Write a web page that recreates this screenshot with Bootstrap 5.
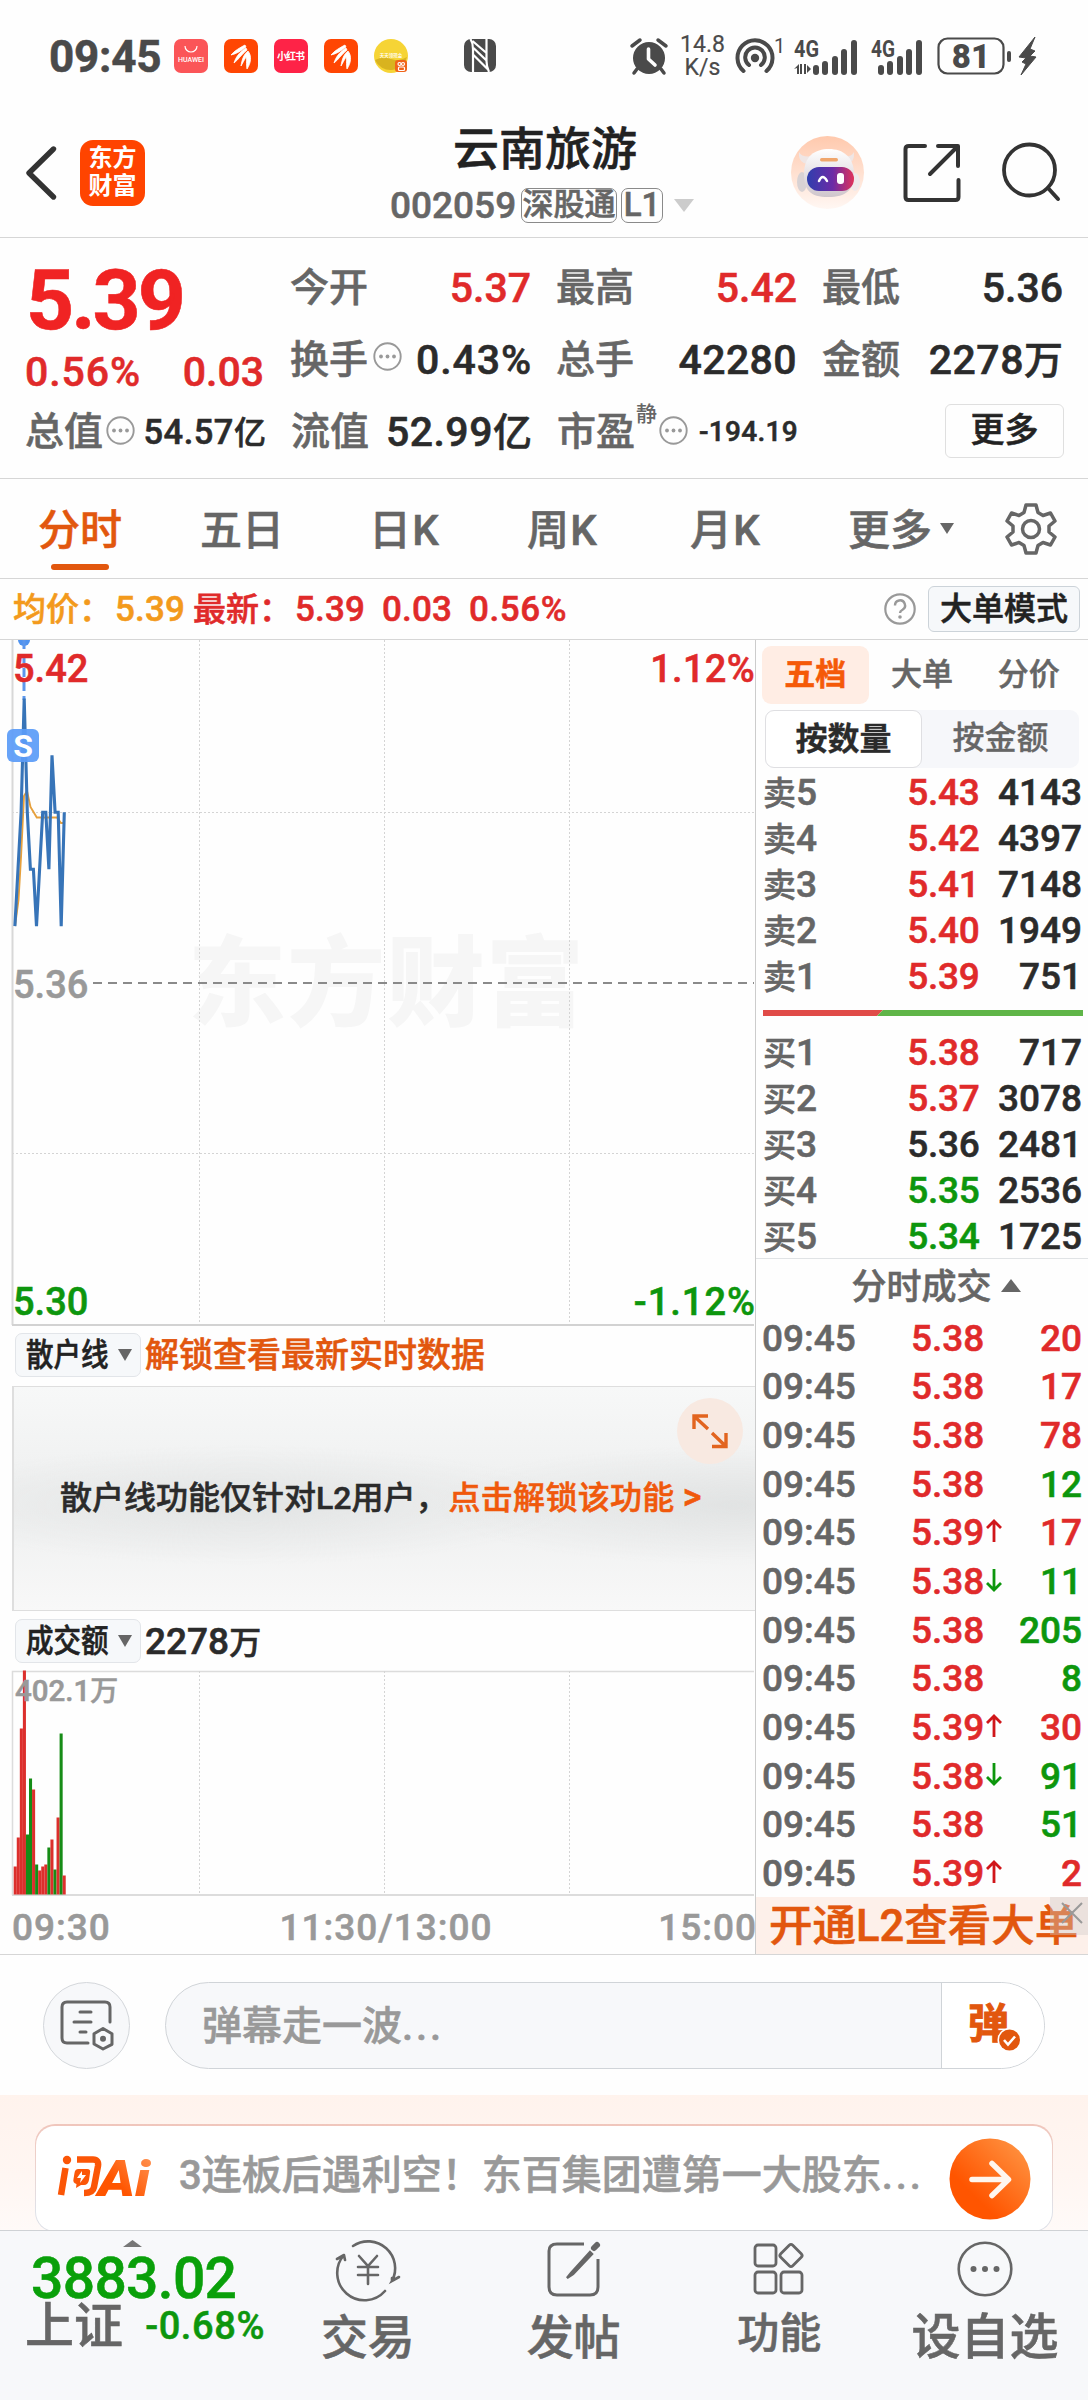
<!DOCTYPE html>
<html lang="zh-CN">
<head>
<meta charset="utf-8">
<meta name="viewport" content="width=device-width, initial-scale=1">
<title>云南旅游 002059</title>
<link href="https://cdn.jsdelivr.net/npm/bootstrap@5.3.0/dist/css/bootstrap.min.css" rel="stylesheet">
<style>
  :root { --up:#e02a2a; --down:#0d960d; --ink:#2b2b2b; --grey:#666; --soft:#999; --accent:#e2570e; --rule:#d6d6d6; }
  body { width:1088px; height:2400px; overflow:hidden; background:#fefefe; color:var(--ink);
         font-family:Roboto,"Noto Sans CJK SC",sans-serif; font-weight:500; font-size:37px; line-height:1; -webkit-text-stroke:.55px; }
  svg { display:block; flex:none; overflow:visible; }
  svg text { -webkit-text-stroke:0; }
  .up { color:var(--up); } .down { color:var(--down); } .ink { color:var(--ink); } .grey { color:var(--grey); } .soft { color:var(--soft); } .accent { color:var(--accent); }
  .rel { position:relative; }
  .status { height:112px; padding-left:49px; color:#4a4a4a; }
  .status .clock { font-size:44px; font-weight:700; width:125px; letter-spacing:-.2px; padding-top:2px; }
  .appdot { width:34px; height:34px; border-radius:7px; margin-right:16px; overflow:hidden; }
  .head { height:126px; border-bottom:1px solid var(--rule); }
  .brand { width:65px; height:66px; border-radius:13px; background:#ff4400; color:#fff; font-size:24px; line-height:28px; font-weight:700; padding-top:4px; -webkit-text-stroke:0; }
  .title { font-size:46px; line-height:56px; color:#222; }
  .tagbox { border:1px solid #8a8a8a; border-radius:7px; height:35px; line-height:32px; font-size:31px; text-align:center; }
  .stats { height:241px; border-bottom:1px solid var(--rule); padding:14px 24px 0 25px; }
  .srow { height:72px; }
  .srow > div { width:241px; margin-right:25px; height:72px; }
  .srow > div:last-child { margin-right:0; }
  .lab { font-size:39px; color:var(--grey); }
  .num { font-size:41px; }
  .pct { letter-spacing:.9px; margin-right:-1px; }
  .morebtn { width:119px; height:54px; border:1px solid #dfdfdf; border-radius:6px; font-size:34px; line-height:51px; text-align:center; color:#222; margin-top:-3px; }
  .tabs { height:100px; border-bottom:1px solid var(--rule); font-size:42px; color:var(--grey); padding-top:5px; }
  .tabs .on { color:var(--accent); }
  .tabs .on::after { content:""; position:absolute; left:13px; bottom:-18px; width:58px; height:6px; border-radius:3px; background:var(--accent); }
  .tabs .kk { letter-spacing:1.2px; }
  .info { height:61px; border-bottom:1px solid var(--rule); padding:0 8px 0 13px; font-size:35px; }
  .info > span { padding-top:1px; letter-spacing:.2px; }
  .info .cj { font-size:33px; letter-spacing:0; }
  .modebtn { width:152px; height:46px; border:1px solid #ccd3d9; border-radius:6px; background:#f6f8fa; font-size:32px; line-height:44px; text-align:center; color:#222; }
  .main { height:1315px; border-bottom:1px solid var(--rule); }
  .lcol { width:756px; padding-left:12px; border-right:1px solid #ccc; }
  .rcol { width:332px; }
  .pricebox { height:686px; }
  .axis { position:absolute; font-size:38px; line-height:40px; }
  .selrow { height:60px; padding-left:3px; }
  .sel { width:126px; height:44px; border:1px solid #e2e5e9; border-radius:7px; background:#f6f8fa; padding-left:10px; margin-right:4px; color:#222; }
  .sel span { font-size:32px; width:82px; white-space:nowrap; }
  .sel b { display:inline-block; font-weight:500; transform:scaleX(.86); transform-origin:0 50%; }
  .lockbox { height:226px; border:1px solid #dedede; border-left-width:2px; border-right:0; font-size:32px; 
    background:radial-gradient(ellipse 330px 60px at 230px 118px,rgba(222,224,224,.75),transparent),radial-gradient(ellipse 300px 60px at 720px 118px,rgba(222,224,224,.8),transparent),linear-gradient(#f7f8f8,#eff0f0 45%,#eff0f0 55%,#f8f8f8); }
  .expand { position:absolute; right:12px; top:11px; width:66px; height:66px; border-radius:50%; background:#f8e9e1; }
  .times { height:58px; padding:4px 0 0 0; color:var(--soft); letter-spacing:1px; }
  .rtabs { height:70px; padding:6px 6px 6px 6px; font-size:31px; }
  .rtabs div { width:107px; height:58px; border-radius:9px; line-height:58px; text-align:center; color:var(--grey); }
  .rtabs .on { background:#ffede4; color:#f55a08; font-weight:700; }
  .seg { height:58px; margin:0 9px; border-radius:9px; background:#f6f7fa; font-size:32px; line-height:57px; text-align:center; color:var(--grey); -webkit-text-stroke:.3px; }
  .seg div { width:50%; }
  .seg .on { background:#fff; border:1px solid #dfdfe2; border-radius:9px; color:#2b2b2b; font-weight:700; }
  .lv { height:46px; padding:2px 6px 0 7px; }
  .lv .cj { font-size:33px; }
  .lv .nm { width:102px; } .lv .pr { width:114.500px; text-align:right; letter-spacing:-.3px; } .lv .qt { flex:1; text-align:right; }
  .tk { height:48.67px; padding:2px 6px 0 6px; }
  .tk .tm { width:149px; } .tk .pr { width:75px; } .tk .ar { width:18px; } .tk .qt { flex:1; text-align:right; }
  .l2bar { height:57px; background:#fdf0ea; color:var(--accent); font-size:43.500px; line-height:59px; padding-left:13px; white-space:nowrap; overflow:hidden; }
  .l2bar i { position:absolute; right:0; top:0; width:38px; height:38px; background:rgba(205,200,200,.38); }
  .danmu { height:140px; padding-left:43px; }
  .rnd { width:87px; height:87px; border:1px solid #d4d7db; border-radius:50%; background:#f7f8fa; margin-right:35px; }
  .bar { width:880px; height:87px; border:1px solid #d0d4d8; border-radius:44px; background:#f7f8fa; overflow:hidden; font-size:40px; color:var(--soft); }
  .bar .send { width:103px; border-left:1px solid #d0d4d8; background:#fff; }
  .ell { letter-spacing:2.900px; }
  .ai { height:135px; background:linear-gradient(#fff3ed,#fff6f2 60%,#fffaf8); padding:29px 35px 0 35px; overflow:hidden; }
  .aicard { height:108px; border-radius:20px; padding:2px 1px 1px; background:linear-gradient(#f0c6bc,#ecd3ce 40%,#dfe1e8 80%); }
  .aiin { height:100%; border-radius:19px; background:#fff; font-size:40px; color:var(--soft); white-space:nowrap; padding-left:21px; }
  .foot { height:171px; background:#f7f8fa; border-top:1px solid #cfd2d5; color:var(--grey); }
  .foot .it { width:205.75px; padding-top:9px; font-size:47px; }
  .foot .it span { line-height:56px; margin-top:12px; white-space:nowrap; }
  .idx { width:265px; padding-left:25px; }
</style>
<script src="https://cdn.jsdelivr.net/npm/bootstrap@5.3.0/dist/js/bootstrap.bundle.min.js"></script>
</head>
<body>

<svg width="0" height="0" class="position-absolute">
  <defs>
    <symbol id="dots" viewBox="0 0 29 29"><circle cx="14.5" cy="14.5" r="13.2" fill="none" stroke="#999" stroke-width="1.9"/><g fill="#999"><circle cx="8" cy="14.5" r="1.9"/><circle cx="14.5" cy="14.5" r="1.9"/><circle cx="21" cy="14.5" r="1.9"/></g></symbol>
    <symbol id="east" viewBox="0 0 34 34"><rect width="34" height="34" fill="#ff4603"/><path d="M7 16C10 12 17 8 21 6l1 2C17 12 12 15 7 16zM10 24c2-7 7-12 12-15l1 2C17 16 14 21 10 24zM17 27c1-7 3-12 7-15 4 5 3 12-1 18-1-6 0-9-1-12-2 3-3 6-5 9z" fill="#fff" stroke="#fff" stroke-width=".8"/></symbol>
  </defs>
</svg>

<!-- system status bar -->
<div class="status d-flex align-items-center">
  <div class="clock">09:45</div>
  <div class="appdot"><svg width="34" height="34"><rect width="34" height="34" fill="#fb5558"/><path d="M11 7a6 6 0 0 0 12 0" fill="none" stroke="#fff" stroke-width="1.2"/><text x="17" y="22.500" text-anchor="middle" font-size="7" textLength="26" fill="#fff">HUAWEI</text></svg></div>
  <div class="appdot"><svg width="34" height="34"><use href="#east"/></svg></div>
  <div class="appdot"><svg width="34" height="34"><rect width="34" height="34" fill="#fe2347"/><text x="17" y="21" text-anchor="middle" font-size="10" font-weight="700" textLength="28" fill="#fff">小红书</text></svg></div>
  <div class="appdot"><svg width="34" height="34"><use href="#east"/></svg></div>
  <div class="appdot rounded-circle me-0" style="overflow:visible"><svg width="34" height="34"><circle cx="17" cy="17" r="17" fill="#f6d435"/><path d="M1 21q8-4 16-1t16-2A17 17 0 0 1 1 21z" fill="#d9b31f"/><text x="17" y="18" text-anchor="middle" font-size="4.500" fill="#fff">天天领现金</text><rect x="21" y="21" width="12" height="12" rx="3" fill="#f0641a"/><g fill="none" stroke="#fff" stroke-width="1.200"><circle cx="25.500" cy="25" r="1.500"/><circle cx="29" cy="25" r="1.500"/><rect x="24.500" y="28" width="6" height="3.500" rx="1"/></g></svg></div>
  <svg width="32" height="34" viewBox="0 0 32 34" style="margin-left:56px"><rect width="32" height="33" rx="7" fill="#4a4a4a"/><g stroke="#fff" stroke-width="2.200" fill="none"><path d="M6.500 0C9 4 9 6 9 10v23M22.500 0v22c0 5 1 8 2.500 11M8.500 2l14 12M9.500 9l13.500 13M9.500 16l14 14"/></g></svg>
  <svg width="38" height="36" viewBox="0 0 38 36" style="margin-left:134px"><circle cx="19" cy="20" r="16" fill="#4a4a4a"/><path d="M2 8l8-6M36 8l-8-6M7 31l-3 4M31 31l3 4" stroke="#4a4a4a" stroke-width="3.500" stroke-linecap="round"/><path d="M18.500 11v10l6.500 6" stroke="#fefefe" stroke-width="3.600" fill="none" stroke-linecap="round" stroke-linejoin="round"/></svg>
  <div class="text-center fw-normal" style="width:64px;font-size:23px;line-height:23px;padding-left:5px;-webkit-text-stroke:.2px">14.8<br>K/s</div>
  <svg width="50" height="36" viewBox="0 0 50 36" style="margin-left:3px"><g fill="none" stroke="#4a4a4a" stroke-width="4" stroke-linecap="round"><path d="M8.500 33A17.500 17.500 0 1 1 31.500 33"/><path d="M14 27A9.800 9.800 0 1 1 26 27"/></g><circle cx="20" cy="20" r="4.200" fill="#4a4a4a"/><text x="39" y="15" font-size="20" font-weight="400" fill="#4a4a4a">1</text></svg>
  <svg width="68" height="40" viewBox="0 -2 68 40" style="margin-left:9px"><g fill="#4a4a4a"><text x="0" y="19" font-size="23" font-weight="700" textLength="25" lengthAdjust="spacingAndGlyphs">4G</text><path d="M5 26v10H3V30L0 31zM6 26l0 10h2V26zM10 26v10h2V26zM13 36V27l4 4-4 4z"/><rect x="19" y="27" width="6" height="10" rx="3"/><rect x="28" y="23" width="6" height="14" rx="3"/><rect x="38" y="18" width="6" height="19" rx="3"/><rect x="47" y="11" width="6" height="26" rx="3"/><rect x="57" y="2" width="6" height="35" rx="3"/></g></svg>
  <svg width="58" height="40" viewBox="0 -2 58 40" style="margin-left:9px"><g fill="#4a4a4a"><text x="0" y="19" font-size="23" font-weight="700" textLength="24" lengthAdjust="spacingAndGlyphs">4G</text><rect x="7" y="27" width="6" height="10" rx="3"/><rect x="16" y="23" width="6" height="14" rx="3"/><rect x="26" y="18" width="6" height="19" rx="3"/><rect x="35" y="11" width="6" height="26" rx="3"/><rect x="45" y="2" width="6" height="35" rx="3"/></g></svg>
  <svg width="104" height="40" viewBox="0 0 104 40" style="margin-left:8px"><rect x="1.500" y="2.500" width="65" height="35" rx="9" fill="none" stroke="#4a4a4a" stroke-width="2.200"/><text x="34" y="31.500" font-size="33" font-weight="900" text-anchor="middle" fill="#4a4a4a">81</text><rect x="70" y="15" width="4" height="11" rx="2" fill="#4a4a4a"/><path d="M98 1L82 21l7 1-4 4 4 2-5 11 15-18-6-1 5-5-5-2z" fill="#4a4a4a" stroke="#4a4a4a"/></svg>
</div>

<!-- title bar -->
<div class="head d-flex rel">
  <svg width="34" height="56" viewBox="0 0 34 56" style="margin:33px 21px 0 25px"><path d="M28.500 4L4 28l24.500 24" fill="none" stroke="#333" stroke-width="5.400" stroke-linecap="round" stroke-linejoin="round"/></svg>
  <div class="brand text-center" style="margin-top:28px">东方<br>财富</div>
  <div class="flex-grow-1"></div>
  <div style="width:310px" class="d-flex flex-column align-items-start">
    <div class="title" style="margin:9px 0 0 63px">云南旅游</div>
    <div class="d-flex align-items-center grey" style="margin-top:10px">
      <span style="width:131px">002059</span>
      <div class="tagbox" style="width:96px">深股通</div>
      <div class="tagbox" style="width:42px;margin:0 11px 0 4px;font-size:33px">L1</div>
      <svg width="20" height="13"><path d="M0 0h20L10 13z" fill="#ccc"/></svg>
    </div>
  </div>
  <svg width="73" height="73" viewBox="0 0 73 73" style="margin:24px 0 0 91px">
    <defs><linearGradient id="rb" x2="0" y2="1"><stop offset="0" stop-color="#ffc9ad"/><stop offset="1" stop-color="#fff7f3"/></linearGradient><linearGradient id="vs"><stop offset="0" stop-color="#2f3fae"/><stop offset=".55" stop-color="#6c2ba6"/><stop offset="1" stop-color="#e0335a"/></linearGradient><linearGradient id="hd" x2="0" y2="1"><stop offset="0" stop-color="#fff"/><stop offset="1" stop-color="#cfc6cc"/></linearGradient></defs>
    <circle cx="36.500" cy="36.500" r="36.500" fill="url(#rb)"/>
    <path d="M8 16q-1 11 9 12l5-8q-11 2-14-4zM63 16q1 11-8 12l-5-8q10 2 13-4z" fill="#efe6e5"/>
    <ellipse cx="11" cy="46" rx="5" ry="10" fill="#d8d2d4"/><ellipse cx="64" cy="46" rx="5" ry="9" fill="#efe9ea"/>
    <path d="M13 38C13 20 24 13 38 13s25 8 25 25c0 16-8 23-26 23S13 54 13 38z" fill="url(#hd)"/>
    <rect x="16" y="31" width="47" height="24" rx="12" fill="url(#vs)"/><rect x="29" y="22" width="18" height="3.500" rx="1.700" fill="#f0a66c"/>
    <path d="M28 45q3.500-8 8 0" stroke="#fff" stroke-width="2.500" fill="none" stroke-linecap="round"/><rect x="46" y="37" width="7" height="11" rx="3" fill="#fff"/>
  </svg>
  <svg width="57" height="59" viewBox="0 0 57 59" style="margin:31px 0 0 39px"><path d="M22 3H6Q2.500 3 2.500 6v48q0 3 3 3h47q3 0 3-3V37M35 3h20v20M54 4L27 31" fill="none" stroke="#333" stroke-width="4" stroke-linecap="round" stroke-linejoin="round"/></svg>
  <svg width="60" height="62" viewBox="0 0 60 62" style="margin:29px 27px 0 41px"><circle cx="28.500" cy="29" r="25.500" fill="none" stroke="#333" stroke-width="3.800"/><path d="M47 47l10 11" stroke="#333" stroke-width="4" stroke-linecap="round"/></svg>
</div>

<!-- quote figures -->
<div class="stats">
  <div class="d-flex">
    <div style="width:265px;height:144px">
      <div class="fw-bold" style="font-size:84px;line-height:84px;color:#f02323;letter-spacing:-3px;margin:7px 0 0 1px">5.39</div>
      <div class="num up d-flex justify-content-between" style="margin:9px 26px 0 0"><span class="pct">0.56%</span><span>0.03</span></div>
    </div>
    <div class="flex-grow-1">
      <div class="srow d-flex">
        <div class="d-flex align-items-center justify-content-between"><span class="lab">今开</span><span class="num up">5.37</span></div>
        <div class="d-flex align-items-center justify-content-between"><span class="lab">最高</span><span class="num up">5.42</span></div>
        <div class="d-flex align-items-center justify-content-between"><span class="lab">最低</span><span class="num">5.36</span></div>
      </div>
      <div class="srow d-flex">
        <div class="d-flex align-items-center justify-content-between"><span class="lab">换手</span><svg width="29" height="29" style="margin:-8px 10px 0 0"><use href="#dots"/></svg><span class="num pct">0.43%</span></div>
        <div class="d-flex align-items-center justify-content-between"><span class="lab">总手</span><span class="num" style="letter-spacing:.4px">42280</span></div>
        <div class="d-flex align-items-center justify-content-between"><span class="lab">金额</span><span class="num"><span style="letter-spacing:.5px">2278</span><span style="font-size:39px">万</span></span></div>
      </div>
    </div>
  </div>
  <div class="srow d-flex">
    <div class="d-flex align-items-center justify-content-between"><span class="lab">总值</span><svg width="29" height="29" style="margin:-4px 0 0 -2px"><use href="#dots"/></svg><span style="font-size:34.500px;margin-left:4px"><span style="letter-spacing:.5px">54.57</span><span style="font-size:32px">亿</span></span></div>
    <div class="d-flex align-items-center justify-content-between"><span class="lab">流值</span><span class="num"><span style="letter-spacing:.5px">52.99</span><span style="font-size:39px">亿</span></span></div>
    <div class="d-flex align-items-center"><span class="lab">市盈</span><span class="grey" style="font-size:21px;margin:-36px 2px 0 1px;-webkit-text-stroke:0">静</span><svg width="29" height="29" style="margin-top:-4px"><use href="#dots"/></svg><span class="ms-auto" style="font-size:28px;letter-spacing:.3px">-194.19</span></div>
    <div class="d-flex align-items-center justify-content-end"><div class="morebtn">更多</div></div>
  </div>
</div>

<!-- chart period tabs -->
<div class="tabs d-flex align-items-center">
  <div class="on rel" style="margin-left:38px;width:162px">分时</div>
  <div style="width:169px">五日</div>
  <div class="kk" style="width:158px">日K</div>
  <div class="kk" style="width:163px">周K</div>
  <div class="kk" style="width:158px">月K</div>
  <div style="width:92px">更多</div>
  <svg width="14" height="11" style="margin-top:-6px"><path d="M0 0h14L7 11z" fill="#666"/></svg>
  <svg width="50" height="52" viewBox="-25 -26 50 52" style="margin:-5px 0 0 52px"><g fill="none" stroke="#666" stroke-width="3.500" stroke-linejoin="round"><path d="M-5-24H5L7-16.500 12-13.500 19.500-16 24-8 18-3V3L24 8 19.500 16 12 13.500 7 16.500 5 24H-5L-7 16.500-12 13.500-19.500 16-24 8-18 3V-3L-24-8-19.500-16-12-13.500-7-16.500z"/><circle r="8.500"/></g></svg>
</div>

<!-- average / last price line -->
<div class="info d-flex align-items-center">
  <span style="color:#f39a1c;width:102px" class="cj">均价：</span><span style="color:#f39a1c;width:78px">5.39</span>
  <span class="up cj" style="width:102px">最新：</span><span class="up" style="width:87px">5.39</span><span class="up" style="width:87px">0.03</span><span class="up" style="letter-spacing:.6px">0.56%</span>
  <svg width="32" height="32" viewBox="0 0 32 32" class="ms-auto" style="margin-right:12px"><circle cx="16" cy="16" r="14.700" fill="none" stroke="#999" stroke-width="2.200"/><path d="M11 12.500a5 5 0 1 1 7.500 4.200Q16 18 16 20" fill="none" stroke="#999" stroke-width="2.400"/><circle cx="16" cy="24" r="1.800" fill="#999"/></svg>
  <div class="modebtn">大单模式</div>
</div>

<div class="main d-flex">
  <!-- charts -->
  <div class="lcol d-flex flex-column">
    <div class="pricebox rel">
      <svg width="742" height="686" viewBox="12 640 742 686">
        <text x="386" y="1018" text-anchor="middle" font-size="98" font-weight="900" textLength="396" fill="#f6f6f6">东方财富</text>
        <g stroke="#d4d4d4" stroke-width="1" stroke-dasharray="2 2"><path d="M199.500 640V1325M384.500 640V1325M569.500 640V1325M12 812.500H754M12 1153.500H754"/></g>
        <path d="M93 983H754" stroke="#8a8a8a" stroke-width="1.800" stroke-dasharray="9 6"/>
        <path d="M12.500 640V1325" stroke="#d8d8d8" stroke-width="2"/><path d="M12 1325H754" stroke="#d2d2d2" stroke-width="2"/>
        <path d="M18 640a6 6 0 0 0 12 0z" fill="#4f93f0"/><path d="M24 640V700" stroke="#5d97ec" stroke-width="3" stroke-dasharray="9 5"/>
        <path d="M15 926L18.500 900 21 857 24 796 27 791 30.500 807 36.800 817.500H57L61 823 64 823" fill="none" stroke="#e6a03c" stroke-width="1.900"/>
        <path id="priceLine" fill="none" stroke="#3774b8" stroke-width="3.100"/>
      </svg>
      <svg width="33" height="34" viewBox="0 0 33 34" class="position-absolute" style="left:-5px;top:89px"><rect width="32" height="33" rx="6" fill="#5b9cf8" fill-opacity=".93"/><text x="16" y="28" text-anchor="middle" font-size="32" font-weight="700" fill="#fff" style="-webkit-text-stroke:.6px #fff">S</text></svg>
      <span class="axis up" style="left:1px;top:9px">5.42</span><span class="axis up" style="right:0;top:9px;letter-spacing:.3px">1.12%</span>
      <span class="axis soft" style="left:1px;top:325px">5.36</span>
      <span class="axis down" style="left:1px;top:642px">5.30</span><span class="axis down" style="right:-1px;top:642px;letter-spacing:1px">-1.12%</span>
    </div>
    <div class="selrow d-flex align-items-center">
      <div class="sel d-flex align-items-center" style="margin-top:-1px"><span><b>散户线</b></span><svg width="14" height="12" style="margin-left:10px"><path d="M0 0h14L7 12z" fill="#666"/></svg></div>
      <span class="accent" style="font-size:34px;margin-top:-1px">解锁查看最新实时数据</span>
    </div>
    <div class="lockbox rel d-flex align-items-center">
      <div style="padding-left:46px;white-space:nowrap;margin-top:-4px">散户线功能仅针对L2用户，<span style="color:#f0590c;letter-spacing:.3px;margin-left:1px">点击解锁该功能 <span style="font-size:36px">&gt;</span></span></div>
      <div class="expand"><svg width="66" height="66" fill="none" stroke="#e2641f" stroke-width="3.400"><path d="M17 31V18H31M17.500 18.500L31 31M35 35L48.500 48M49 35V48.500H35"/></svg></div>
    </div>
    <div class="selrow d-flex align-items-center">
      <div class="sel d-flex align-items-center" style="margin-top:-1px"><span><b>成交额</b></span><svg width="14" height="12" style="margin-left:10px"><path d="M0 0h14L7 12z" fill="#666"/></svg></div>
      <span>2278<span style="font-size:32px">万</span></span>
    </div>
    <div class="rel" style="height:225px">
      <svg width="742" height="225" viewBox="12 1671 742 225">
        <path d="M12.500 1895V1671.500H754" fill="none" stroke="#dcdcdc" stroke-width="1.500"/><path d="M12 1895H754" stroke="#dcdcdc" stroke-width="2"/>
        <path d="M199.500 1671V1895M384.500 1671V1895M569.500 1671V1895" stroke="#d4d4d4" stroke-dasharray="2 2"/>
        <g id="volBars"></g>
      </svg>
      <span class="axis soft" style="left:3px;top:0;font-size:29.500px">402.1<span style="font-size:28px">万</span></span>
    </div>
    <div class="times d-flex align-items-center justify-content-between"><span>09:30</span><span style="padding-left:3px">11:30/13:00</span><span style="margin-right:-2px">15:00</span></div>
  </div>

  <!-- order book and trades -->
  <div class="rcol">
    <div class="rtabs d-flex"><div class="on">五档</div><div>大单</div><div>分价</div></div>
    <div class="seg d-flex"><div class="on">按数量</div><div>按金额</div></div>
    <div style="height:231px" id="asks"></div>
    <svg width="320" height="6" style="margin:11px 0 12px 7px"><path d="M0 0H120L114 6H0z" fill="#e04b48"/><path d="M120 0H320V6H114z" fill="#5fb548"/></svg>
    <div style="height:230px" id="bids"></div>
    <div class="d-flex align-items-center justify-content-center grey" style="height:55px;border-top:1px solid #e0e3e5;font-size:35px;padding:3px 0 0 47px">分时成交<svg width="20" height="13" style="margin:-5px 19px 0 9px"><path d="M0 13h20L10 0z" fill="#666"/></svg></div>
    <div style="height:584px" id="ticks"></div>
    <div class="l2bar rel">开通L2查看大单<i></i><svg width="24" height="24" class="position-absolute" style="right:4px;top:4px"><path d="M2 2L22 22M22 2L2 22" stroke="#999" stroke-width="2"/></svg></div>
  </div>
</div>

<!-- comment bar -->
<div class="danmu d-flex align-items-center">
  <div class="rnd d-flex align-items-center justify-content-center"><svg width="54" height="52" viewBox="0 0 54 52"><g fill="none" stroke="#666" stroke-width="3" stroke-linecap="round"><path d="M50 23V8q0-5-5-5H7Q2 3 2 8v31q0 5 5 5H28"/><path d="M20 13H31M14 23H31M20 33H26"/><path d="M43 29.500l9 5.200v10.600L43 50l-9-5V34.700z" stroke-linejoin="round"/></g><circle cx="43" cy="39.800" r="3" fill="#666"/></svg></div>
  <div class="bar d-flex">
    <div class="flex-grow-1 d-flex align-items-center" style="padding:3px 0 0 36px">弹幕走一波<span class="ell">...</span></div>
    <div class="send d-flex align-items-center"><svg width="56" height="56" viewBox="0 0 56 56" style="margin-left:27px"><text x="-1" y="41" font-size="41" font-weight="700" fill="#e2570e" stroke="#e2570e" stroke-width="1">弹</text><circle cx="40.500" cy="43" r="12" fill="#fff"/><circle cx="40.500" cy="43" r="10.500" fill="#e2570e"/><path d="M35 43l4 4.500 7-8" fill="none" stroke="#fff" stroke-width="2.600"/></svg></div>
  </div>
</div>

<!-- AI question card -->
<div class="ai"><div class="aicard"><div class="aiin d-flex align-items-center">
  <svg width="98" height="46" viewBox="0 0 98 46" style="margin:-4px 24px 0 0"><defs><linearGradient id="lg" x1="0" y1="1" x2="1" y2="0"><stop offset=".4" stop-color="#ff5500"/><stop offset="1" stop-color="#ff9a5c"/></linearGradient></defs><g fill="none" stroke="#fb5607" stroke-width="6.500" stroke-linejoin="round"><path d="M8.500 14L4 41M20 5.500H36Q42 5.500 41 12L37 33Q36 39 27 39"/></g><circle cx="10" cy="6" r="4.200" fill="#fb5607"/><path d="M18 15h12q4 0 3 4l-1 7q-1 5-5 5h-3l-5 3 .500-4q-4-1-3-5l1-6q.500-4 4-4z" fill="#fb5607"/><path d="M25 17l-5 7h4l-1 5 6-8h-4z" fill="#fff"/><text x="41" y="42" font-size="50" font-weight="900" font-style="italic" fill="url(#lg)" textLength="52" lengthAdjust="spacingAndGlyphs">Ai</text></svg>
  <span style="margin-top:-5px">3连板后遇利空！东百集团遭第一大股东<span class="ell">...</span></span>
  <svg width="82" height="82" viewBox="0 0 82 82" class="ms-auto" style="margin-right:21px"><defs><linearGradient id="go" x1=".3" y1=".7" x2="1" y2="0"><stop offset="0" stop-color="#ff5500"/><stop offset="1" stop-color="#ff9b4a"/></linearGradient></defs><circle cx="41" cy="41" r="40.500" fill="url(#go)"/><path d="M23 41.500H59M43 25.500L59.500 41.500 43 57.500" fill="none" stroke="#fff6ee" stroke-width="5.500" stroke-linecap="round" stroke-linejoin="round"/></svg>
</div></div></div>

<!-- bottom navigation -->
<div class="foot d-flex">
  <div class="idx rel">
    <svg width="19" height="7" style="margin:9px 0 0 98px"><path d="M0 7h19L9.500 0z" fill="#777"/></svg>
    <div style="font-size:57px;line-height:50px;margin:7px 0 0 6px;color:#0aa00a;letter-spacing:-.7px">3883.02</div>
    <div class="d-flex align-items-center justify-content-between"><span style="font-size:49px;line-height:46px">上证</span><span class="down" style="font-size:38px;letter-spacing:.6px;margin-top:-2px">-0.68%</span></div>
  </div>
  <div class="it d-flex flex-column align-items-center">
    <svg width="62" height="58" viewBox="-31 -29 62 58" fill="none" stroke="#666" stroke-width="2.600" stroke-linecap="round"><path d="M-15-23A27 27 0 0 1 24 12l7-4M24 12l0-3"/><path d="M17 22A27 27 0 0 1-24-14l-7 4M-24-14l1 5"/><path d="M-9-13L0-3 9-13M0-3V15M-10-2H10M-10 6H10"/></svg>
    <span>交易</span>
  </div>
  <div class="it d-flex flex-column align-items-center">
    <svg width="54" height="58" viewBox="0 0 54 58" fill="none" stroke="#666" stroke-width="3"><path d="M37 4H10Q2 4 2 11V47q0 8 8 8H43q8 0 8-8V19"/><path d="M43 12L24 33 20 38l6-4L45 14z" fill="#666" stroke-width="2.500"/><path d="M47 8l3-3" stroke-width="6" stroke-linecap="round"/></svg>
    <span>发帖</span>
  </div>
  <div class="it d-flex flex-column align-items-center">
    <svg width="52" height="58" viewBox="0 0 52 58" fill="none" stroke="#666" stroke-width="2.800" stroke-linejoin="round"><rect x="2" y="5" width="21" height="21" rx="3"/><rect x="2" y="32" width="21" height="21" rx="3"/><rect x="28" y="32" width="21" height="21" rx="3"/><rect x="29.500" y="7" width="17" height="17" rx="2.500" transform="rotate(45 38 15.500)"/></svg>
    <span style="font-size:42px;margin-top:8px">功能</span>
  </div>
  <div class="it d-flex flex-column align-items-center">
    <svg width="56" height="58" viewBox="-28 -29 56 58"><circle r="26.300" fill="none" stroke="#666" stroke-width="2.600"/><g fill="#666"><circle cx="-11.500" r="3"/><circle r="3"/><circle cx="11.500" r="3"/></g></svg>
    <span style="font-size:49px">设自选</span>
  </div>
</div>

<script>
  const cls = p => p > 5.36 ? 'up' : p < 5.36 ? 'down' : 'ink';
  const level = (n, p, q) => `<div class="lv d-flex align-items-center"><span class="nm grey"><span class="cj">${n[0]}</span>${n[1]}</span><span class="pr ${cls(p)}">${p.toFixed(2)}</span><span class="qt ink">${q}</span></div>`;
  asks.innerHTML = [['卖5',5.43,4143],['卖4',5.42,4397],['卖3',5.41,7148],['卖2',5.40,1949],['卖1',5.39,751]].map(r => level(...r)).join('');
  bids.innerHTML = [['买1',5.38,717],['买2',5.37,3078],['买3',5.36,2481],['买4',5.35,2536],['买5',5.34,1725]].map(r => level(...r)).join('');

  const arrow = { u: '<svg width="16" height="24" style="margin-top:-4px"><path d="M8 23V2M1 9L8 2l7 7" fill="none" stroke="#d0161a" stroke-width="2.800"/></svg>',
                  d: '<svg width="16" height="24" style="margin-top:-4px"><path d="M8 1V22M1 15l7 7 7-7" fill="none" stroke="#0d960d" stroke-width="2.800"/></svg>', '': '' };
  ticks.innerHTML = [[5.38,'',20,1],[5.38,'',17,1],[5.38,'',78,1],[5.38,'',12,0],[5.39,'u',17,1],[5.38,'d',11,0],[5.38,'',205,0],[5.38,'',8,0],[5.39,'u',30,1],[5.38,'d',91,0],[5.38,'',51,0],[5.39,'u',2,1]]
    .map(([p,a,q,b]) => `<div class="tk d-flex align-items-center"><span class="tm grey">09:45</span><span class="pr up">${p.toFixed(2)}</span><span class="ar">${arrow[a]}</span><span class="qt ${b ? 'up' : 'down'}">${q}</span></div>`).join('');

  const step = 3.09, prices = [5.37,5.38,5.39,5.41,5.39,5.38,5.38,5.37,5.38,5.39,5.39,5.38,5.40,5.39,5.39,5.37,5.39];
  priceLine.setAttribute('d', 'M' + prices.map((p,i) => (14.9 + i*step).toFixed(1) + ' ' + (983 - (p-5.36)*5690).toFixed(1)).join('L'));

  const vols = [[28,1],[57,1],[166,1],[224,1],[60,0],[116,0],[105,1],[30,0],[24,1],[28,1],[30,1],[47,0],[55,1],[25,0],[77,1],[161,0],[19,1]];
  volBars.innerHTML = vols.map(([h,r],i) => `<rect x="${(13.7+i*3.06).toFixed(2)}" y="${1894.5-h}" width="3.06" height="${h}" fill="${r ? '#dc2f2c' : '#168c16'}"/>`).join('');
</script>
</body>
</html>
